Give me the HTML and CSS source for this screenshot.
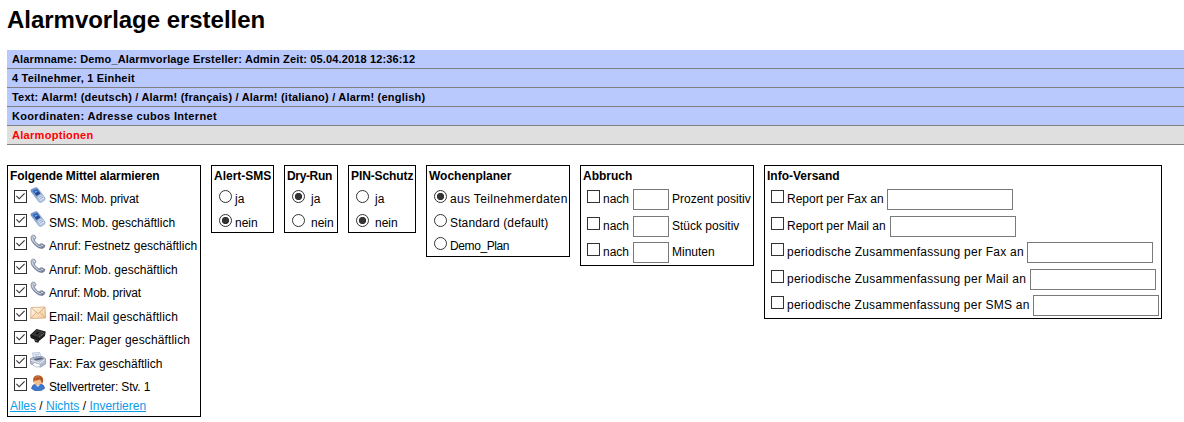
FILE: index.html
```html
<!DOCTYPE html>
<html lang="de">
<head>
<meta charset="utf-8">
<title>Alarmvorlage erstellen</title>
<link rel="stylesheet" href="styles.css">
</head>
<body>
<svg class="defs" width="0" height="0" aria-hidden="true">
  <defs>
    <linearGradient id="blue" x1="0" y1="0" x2="1" y2="1"><stop offset="0" stop-color="#5484cc"/><stop offset="1" stop-color="#c6d5ea"/></linearGradient>
    <linearGradient id="metal" x1="0" y1="0" x2="1" y2="1"><stop offset="0" stop-color="#b4bdce"/><stop offset="1" stop-color="#5f6b83"/></linearGradient>
    <linearGradient id="paper" x1="0" y1="0" x2="1" y2="1"><stop offset="0" stop-color="#fffaf0"/><stop offset="1" stop-color="#f5c894"/></linearGradient>
    <symbol id="mobile" viewBox="0 0 16 16">
      <path d="M1 2.5 6 .5 7.5 1 15 11 14.8 13 11 15.5 9 15 1 4.5Z" fill="url(#blue)" stroke="#8ba3c8" stroke-width=".7"/>
      <path d="M3 4 7 2 10.5 6.5 6.5 9Z" fill="#234a91"/><path d="M4 4.5 6.8 3 8 4.5 5.2 6.2Z" fill="#5b98e8"/>
      <path d="m7.5 10 3.8-2.4 2.8 4-4 2.4Z" fill="#d5e0ee"/><path d="m8.5 10.8 3.5-2.1m-2.4 3.6 3.5-2.2" stroke="#8497b5" stroke-width=".7"/>
    </symbol>
    <symbol id="phone" viewBox="0 0 16 16">
      <path d="M1 2.5Q2.5.2 4.7 1.3L6 3.6Q6 5 4.3 5.9 5 8.5 9 11 10.5 9.2 12.2 9.8L14.8 11.3Q15.4 13.4 12.5 14.5 8.5 15 4.2 10.5.2 6.5 1 2.5Z" fill="url(#metal)" stroke="#6c7993" stroke-width=".6"/>
      <path d="M2 3.5Q2.5 7 5.2 9.5 8 12.5 11.5 13" fill="none" stroke="#dce2ec" stroke-width=".9"/>
      <path d="M3.3 1.8 4.8 4.2M10.8 10.8l2.6 1.4" stroke="#eef1f6"/>
    </symbol>
    <symbol id="mail" viewBox="0 0 16 16">
      <path d="m1 2.5 14-.5.5 11L.7 13.5Z" fill="url(#paper)" stroke="#d3a778" stroke-width=".8"/>
      <path d="m1.5 3 6.6 5.7 6.4-6.2M1.3 13l5-5.6m3.5-.2 5.1 5.1" fill="none" stroke="#d5a16c" stroke-width=".8"/>
    </symbol>
    <symbol id="pager" viewBox="0 0 16 16">
      <path d="M0 7 6.5 1 15.7 3.5 15 8 9 13 8.3 14.8 5 14 4.3 11.5 .8 10Z" fill="#1d1d1d"/>
      <path d="M1.5 6.8 7 2 14 4 8.3 9Z" fill="#383838"/><path d="m5 5.8 2.5-2 2.2.7-2.4 2Z" fill="#171717"/>
      <path d="m9 9.3 5.2-4.3" stroke="#858585" stroke-width=".8"/><path d="m5 12 2 .7" stroke="#777" stroke-width=".7"/>
    </symbol>
    <symbol id="fax" viewBox="0 0 16 16">
      <path d="m2.5 1 7-.5L12 7 4 8Z" fill="#eef4fc" stroke="#8da1bf" stroke-width=".6"/>
      <path d="m4.3 3 4.8-.4M5 5l4.8-.5" stroke="#7fa1d0" stroke-width=".7"/>
      <path d="M.2 6.7 3 5.5l9.5-1L15.8 7v4.7L10.5 15 .8 12Z" fill="#b4bed0" stroke="#77849c" stroke-width=".7"/>
      <path d="m3.5 7 8-1.4 2.2 1.5L6 8.5Z" fill="#56627a"/><path d="M1.2 8.4 9.8 11l5-3.4" fill="none" stroke="#edf1f8"/>
      <path d="m4 10.5 5.5 1.5 1.5 2.5-4.5.6-4-2.2Z" fill="#fff" stroke="#8391aa" stroke-width=".5"/>
    </symbol>
    <symbol id="person" viewBox="0 0 16 16">
      <path d="M1.5 13.5Q2 9.5 5.8 9h4.4q4 .5 4.4 4.3Q12 16 8 16t-6.5-2.5Z" fill="#3c78d0" stroke="#285196" stroke-width=".6"/>
      <path d="m6 10 1.8 2 2-2" fill="#dbe9fb"/>
      <circle cx="7.7" cy="6" r="4.2" fill="#f3bd8e"/>
      <path d="M3.3 7.5Q2 .5 7.8.3q6.3.2 5.3 6.8L11.5 9.7Q12 5.5 9.5 4.4 6.5 6 4.8 5.3Z" fill="#b45824"/>
      <path d="M5 3Q7 1 9.5 2" stroke="#db8249" fill="none"/>
    </symbol>
  </defs>
</svg>
<h1 class="title">Alarmvorlage erstellen</h1>
<div class="summary">
  <div class="bar name">Alarmname: Demo_Alarmvorlage Ersteller: Admin Zeit: 05.04.2018 12:36:12</div>
  <div class="bar members">4 Teilnehmer, 1 Einheit</div>
  <div class="bar message">Text: Alarm! (deutsch) / Alarm! (français) / Alarm! (italiano) / Alarm! (english)</div>
  <div class="bar place">Koordinaten: Adresse cubos Internet</div>
  <div class="bar current">Alarmoptionen</div>
</div>
<form class="options">
  <section class="box means">
    <h2>Folgende Mittel alarmieren</h2>
    <label class="row tight"><input type="checkbox" checked><svg class="icon"><use href="#mobile"/></svg><span>SMS: Mob. privat</span></label>
    <label class="row"><input type="checkbox" checked><svg class="icon"><use href="#mobile"/></svg><span>SMS: Mob. geschäftlich</span></label>
    <label class="row"><input type="checkbox" checked><svg class="icon"><use href="#phone"/></svg><span>Anruf: Festnetz geschäftlich</span></label>
    <label class="row"><input type="checkbox" checked><svg class="icon"><use href="#phone"/></svg><span>Anruf: Mob. geschäftlich</span></label>
    <label class="row tight"><input type="checkbox" checked><svg class="icon"><use href="#phone"/></svg><span>Anruf: Mob. privat</span></label>
    <label class="row loose"><input type="checkbox" checked><svg class="icon"><use href="#mail"/></svg><span>Email: Mail geschäftlich</span></label>
    <label class="row loose"><input type="checkbox" checked><svg class="icon"><use href="#pager"/></svg><span>Pager: Pager geschäftlich</span></label>
    <label class="row"><input type="checkbox" checked><svg class="icon"><use href="#fax"/></svg><span>Fax: Fax geschäftlich</span></label>
    <label class="row tight"><input type="checkbox" checked><svg class="icon"><use href="#person"/></svg><span>Stellvertreter: Stv. 1</span></label>
    <div class="links"><a href="#">Alles</a> / <a href="#">Nichts</a> / <a href="#">Invertieren</a></div>
  </section>
  <section class="box alert">
    <h2>Alert-SMS</h2>
    <label class="row"><input type="radio" name="alert"><span>ja</span></label>
    <label class="row"><input type="radio" name="alert" checked><span>nein</span></label>
  </section>
  <section class="box dry spaced">
    <h2>Dry-Run</h2>
    <label class="row"><input type="radio" name="dry" checked><span>ja</span></label>
    <label class="row"><input type="radio" name="dry"><span>nein</span></label>
  </section>
  <section class="box pin spaced">
    <h2>PIN-Schutz</h2>
    <label class="row"><input type="radio" name="pin"><span>ja</span></label>
    <label class="row"><input type="radio" name="pin" checked><span>nein</span></label>
  </section>
  <section class="box week">
    <h2>Wochenplaner</h2>
    <label class="row"><input type="radio" name="week" checked><span class="own">aus Teilnehmerdaten</span></label>
    <label class="row"><input type="radio" name="week"><span class="default">Standard (default)</span></label>
    <label class="row"><input type="radio" name="week"><span class="demo">Demo_Plan</span></label>
  </section>
  <section class="box abort fields">
    <h2>Abbruch</h2>
    <div class="row"><input type="checkbox"><span class="after">nach</span><input type="text"><span>Prozent positiv</span></div>
    <div class="row"><input type="checkbox"><span class="after">nach</span><input type="text"><span>Stück positiv</span></div>
    <div class="row"><input type="checkbox"><span class="after">nach</span><input type="text"><span>Minuten</span></div>
  </section>
  <section class="box info fields">
    <h2>Info-Versand</h2>
    <div class="row"><input type="checkbox"><span class="fax">Report per Fax an</span><input type="text"></div>
    <div class="row"><input type="checkbox"><span class="mail">Report per Mail an</span><input type="text"></div>
    <div class="row"><input type="checkbox"><span class="sum-fax">periodische Zusammenfassung per Fax an</span><input type="text"></div>
    <div class="row"><input type="checkbox"><span class="sum-mail">periodische Zusammenfassung per Mail an</span><input type="text"></div>
    <div class="row"><input type="checkbox"><span class="sum-sms">periodische Zusammenfassung per SMS an</span><input type="text"></div>
  </section>
</form>
</body>
</html>
```
FILE: styles.css
```css
* { box-sizing: border-box; }
body { margin: 0 0 0 7px; overflow: hidden; background: #fff; color: #000; font: 12px/14px "Liberation Sans", Arial, sans-serif; }
.defs { display: block; }
.title { margin: 0; padding-top: 5px; height: 50px; font-size: 24px; line-height: 29px; letter-spacing: -.03px; }
.bar { height: 19px; padding-left: 5px; border-bottom: 1px solid #808080; background: #b9c9fe; font-size: 11px; font-weight: bold; line-height: 18px; white-space: nowrap; }
.name { letter-spacing: .147px; }
.members { letter-spacing: .19px; }
.message { letter-spacing: .205px; }
.place { letter-spacing: .33px; }
.current { background: #dfdfdf; color: #f00; letter-spacing: .3px; }
.options { display: flex; align-items: flex-start; gap: 10px; margin-top: 20px; }
.box { flex: none; border: 1px solid #000; padding-left: 2px; white-space: nowrap; }
.box h2 { height: 21px; margin: 0; padding-top: 3px; font-size: 12px; line-height: 14px; }
.means { width: 194px; height: 252px; }
.means h2, .pin h2 { letter-spacing: -.1px; }
.alert { width: 63px; height: 68px; }
.dry { width: 54px; height: 68px; }
.dry h2 { letter-spacing: -.35px; }
.pin { width: 68px; height: 68px; }
.week { width: 144px; height: 92px; }
.abort { width: 174px; height: 101px; }
.info { width: 398px; height: 154px; }
.row { display: flex; align-items: flex-start; height: 23.5px; padding-left: 4px; }
.row span { flex: none; margin: 5px 0 0 3px; }
.tight span { letter-spacing: -.15px; }
.loose span { letter-spacing: .15px; }
.alert .row, .week .row, .spaced .row { padding-left: 5px; }
.spaced .row span { margin-left: 6px; }
.own { letter-spacing: .34px; }
.default { letter-spacing: .13px; }
.demo { letter-spacing: -.4px; }
.fields .row { height: 26.5px; }
.row input { appearance: none; flex: none; width: 13px; height: 13px; margin: 3px 0 0; border: 1px solid #333; background: #fff; }
.row input[type="radio"] { border-radius: 50%; }
.row input[type="radio"]:checked { background: radial-gradient(circle, #333 3.3px, #fff 4px); }
.row input[type="checkbox"]:checked::before { content: ""; display: block; width: 11px; height: 11px; background: #333; clip-path: polygon(1px 5.3px, 1.8px 4.5px, 4.2px 6.9px, 9.2px 1.9px, 10px 2.7px, 4.2px 8.5px); }
.row input[type="text"] { width: 126px; height: 21px; margin: 2px 0 0; border-color: #7a7a7a; }
.row .icon { flex: none; width: 16px; height: 16px; margin-left: 3px; }
.abort .row input[type="text"] { width: 36px; }
.row .after { width: 27px; margin-right: 3px; }
.row .fax { width: 100px; }
.row .mail { width: 103px; }
.row .sum-fax { width: 240px; letter-spacing: .25px; }
.row .sum-mail { width: 243px; letter-spacing: .25px; }
.row .sum-sms { width: 246px; letter-spacing: .24px; }
.links { color: #000; }
.links a { color: #0b9be8; text-decoration: underline; }
```
